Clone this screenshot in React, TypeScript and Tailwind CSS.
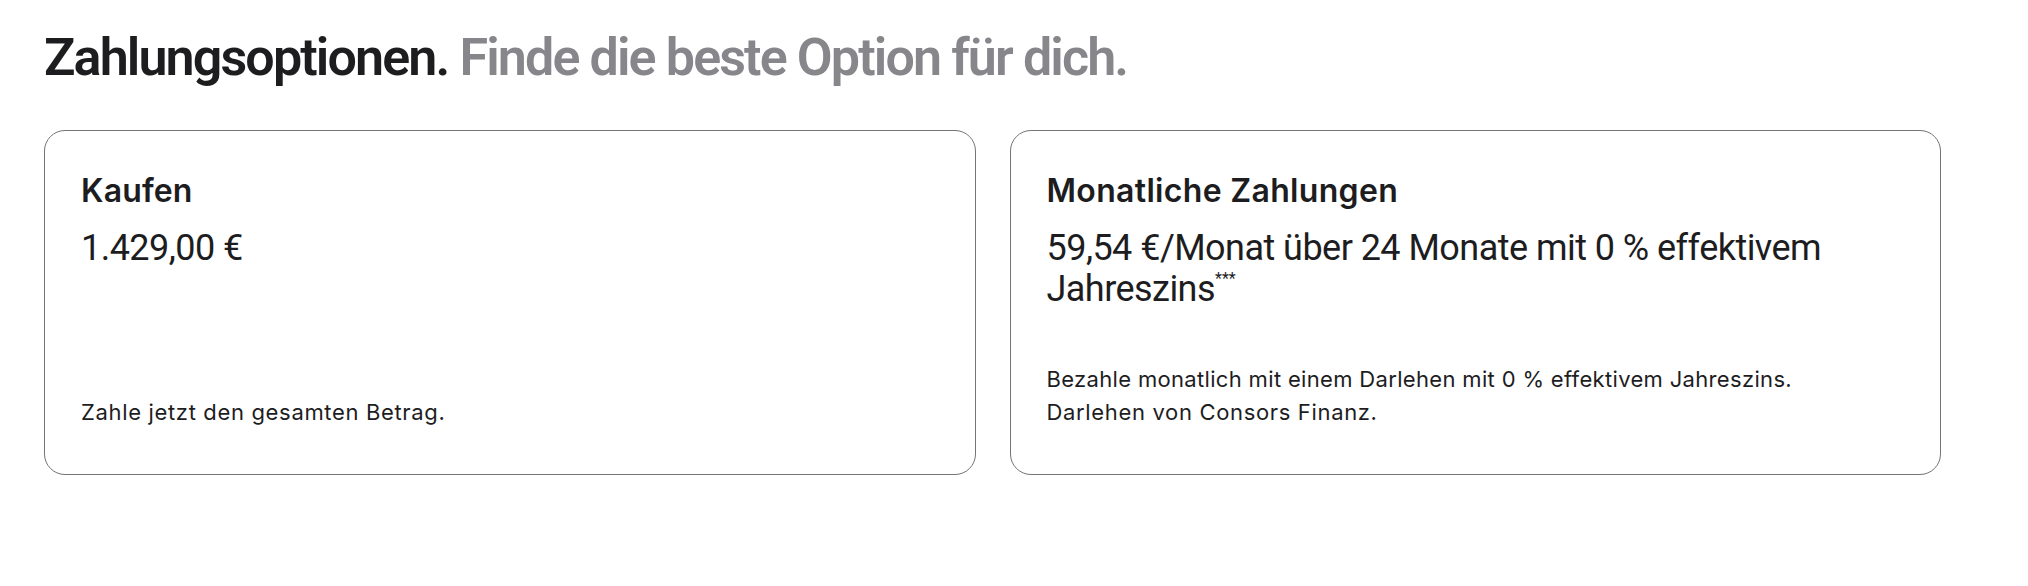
import React from "react";

export default function App() {
  return (
    <div className="w-[2028px] h-[586px] bg-white text-[#1d1d1f] font-['Inter','Noto_Sans',sans-serif] antialiased">
      <div className="pl-[44px] pt-[30px]">
        <h2 className="font-['Roboto','Inter',sans-serif] text-[52px] leading-[56px] font-semibold tracking-[-0.036em]">
          Zahlungsoptionen. <span className="text-[#86868b]">Finde die beste Option für dich.</span>
        </h2>
        <div className="mt-[44px] grid w-[1897px] grid-cols-2 gap-[34px]">
          <div className="flex h-[345px] flex-col justify-between rounded-[21px] border border-[#747479] px-[36px] pt-[40px] pb-[45px]">
            <div>
              <h3 className="text-[32px] leading-[40px] font-semibold tracking-[0.005em]">Kaufen</h3>
              <p className="mt-[17px] font-['Roboto','Inter',sans-serif] text-[36px] leading-[41px] font-normal tracking-[-0.015em]">1.429,00 €</p>
            </div>
            <p className="text-[22px] leading-[33px] tracking-[0.03em]">Zahle jetzt den gesamten Betrag.</p>
          </div>
          <div className="flex h-[345px] flex-col justify-between rounded-[21px] border border-[#747479] px-[36px] pt-[40px] pb-[45px]">
            <div>
              <h3 className="text-[32px] leading-[40px] font-semibold tracking-[0.01em]">Monatliche Zahlungen</h3>
              <p className="mt-[17px] font-['Roboto','Inter',sans-serif] text-[36px] leading-[41px] font-normal tracking-[-0.015em]">
                59,54 €/Monat über 24 Monate mit 0 % effektivem
                <br />
                Jahreszins
                <sup className="relative top-[-4px] text-[16px] align-super leading-none tracking-normal">***</sup>
              </p>
            </div>
            <p className="text-[22px] leading-[33px] tracking-[0.03em]">
              <span className="tracking-[0.015em]">Bezahle monatlich mit einem Darlehen mit 0 % effektivem Jahreszins.</span>
              <br />
              <span>Darlehen von Consors Finanz.</span>
            </p>
          </div>
        </div>
      </div>
    </div>
  );
}
